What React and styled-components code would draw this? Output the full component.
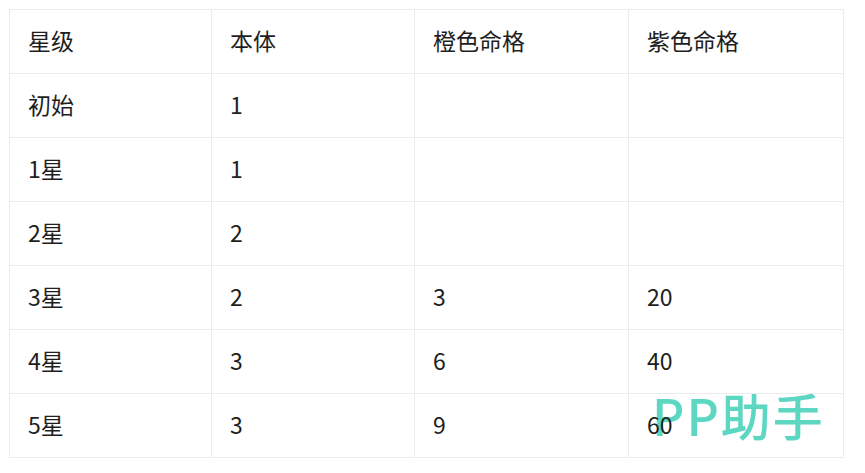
import React from "react";
import styled, { createGlobalStyle } from "styled-components";

const Global = createGlobalStyle`
  html, body { margin: 0; padding: 0; background: #fff; }
  body { font-family: "Noto Sans CJK SC", "Noto Sans", sans-serif; }
`;

const Wrap = styled.div`
  position: relative;
  z-index: 0;
  padding: 9px;
  width: 834px;
`;

const Table = styled.table`
  border-collapse: collapse;
  table-layout: fixed;
  width: 835px;
  color: #1e1e1e;
  font-size: 23px;
`;

const Cell = styled.td`
  border: 1px solid #ececec;
  height: 60px;
  padding: 0 0 3px 18px;
  vertical-align: middle;
  font-weight: 400;
  text-align: left;
  line-height: 1;
`;

const Watermark = styled.div`
  position: absolute;
  z-index: -1;
  left: 652px;
  top: 384px;
  font-family: "Noto Sans CJK SC", sans-serif;
  font-size: 50px;
  font-weight: 500;
  color: #5dd6c2;
  letter-spacing: 2px;
  line-height: 1.2;
  pointer-events: none;
`;

const widths = [202, 203, 214, 215];
const rows = [
  ["星级", "本体", "橙色命格", "紫色命格"],
  ["初始", "1", "", ""],
  ["1星", "1", "", ""],
  ["2星", "2", "", ""],
  ["3星", "2", "3", "20"],
  ["4星", "3", "6", "40"],
  ["5星", "3", "9", "60"],
];

export default function App() {
  return (
    <Wrap>
      <Global />
      <Watermark>PP助手</Watermark>
      <Table>
        <colgroup>
          {widths.map((w, i) => (
            <col key={i} style={{ width: w }} />
          ))}
        </colgroup>
        <tbody>
          {rows.map((r, i) => (
            <tr key={i}>
              {r.map((c, j) => (
                <Cell key={j}>{c}</Cell>
              ))}
            </tr>
          ))}
        </tbody>
      </Table>
    </Wrap>
  );
}
